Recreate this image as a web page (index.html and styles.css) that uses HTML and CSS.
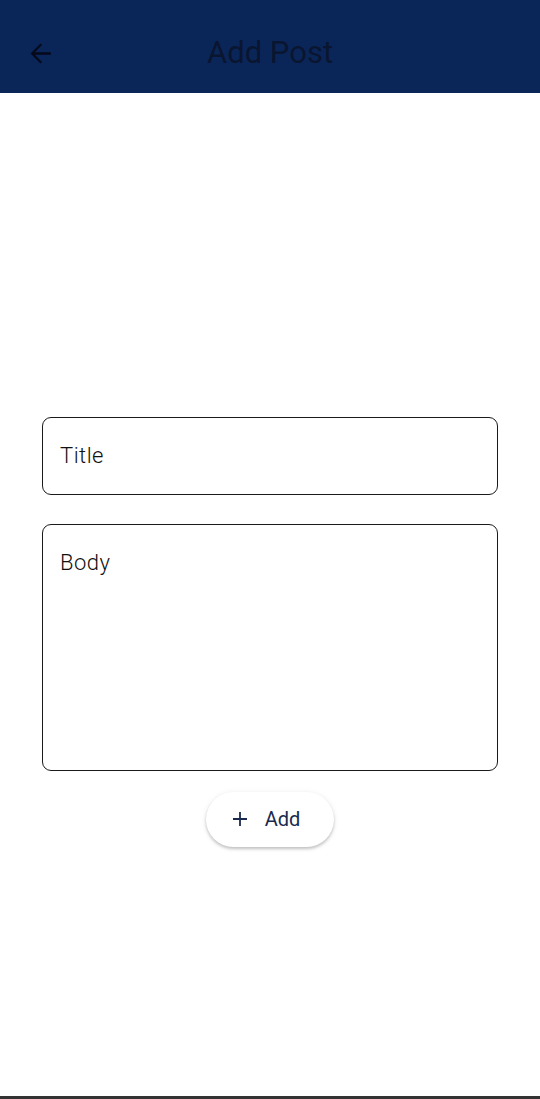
FILE: index.html
```html
<!DOCTYPE html>
<html>
<head>
<meta charset="utf-8">
<link rel="stylesheet" href="styles.css">
</head>
<body>
<div class="screen">
  <header class="appbar">
    <button class="back" aria-label="Back">
      <svg width="31" height="31" viewBox="0 0 24 24"><path d="M20 11.1H7.6l5.6-5.6L12 4.3 4.3 12l7.7 7.7 1.2-1.2-5.6-5.6H20z" fill="#05091a"/></svg>
    </button>
    <h1 class="title">Add Post</h1>
  </header>
  <main class="content">
    <div class="field title-field"><span class="label">Title</span></div>
    <div class="field body-field"><span class="label">Body</span></div>
    <button class="add-btn">
      <svg width="16" height="16" viewBox="0 0 16 16"><path d="M8 1v14M1 8h14" stroke="#1a2a4f" stroke-width="1.8"/></svg>
      <span>Add</span>
    </button>
  </main>
  <div class="navbar"></div>
</div>
</body>
</html>
```
FILE: styles.css
```css
* { box-sizing: border-box; }
html, body { margin: 0; padding: 0; }
body { background: #fff; font-family: Roboto, "Noto Sans", sans-serif; }
.screen { width: 540px; height: 1099px; display: flex; flex-direction: column; }
.appbar {
  height: 93px; background: #0a2659; display: flex; align-items: center;
  padding: 0 0 0 24px; position: relative; flex: none;
}
.back { background: none; border: 0; padding: 0; width: 32px; height: 32px; display: flex; align-items: center; justify-content: center; margin-top: 14px; }
.title {
  position: absolute; left: 0; right: 0; top: 31px; margin: 0; text-align: center;
  font-weight: 400; font-size: 31px; line-height: 44px; color: #0a1530;
}
.content { flex: 1; display: flex; flex-direction: column; align-items: center; padding-top: 324px; }
.field {
  width: 456px; border: 1.6px solid #1a1a1a; border-radius: 9px; padding: 0 17px;
}
.title-field { height: 78px; display: flex; align-items: center; }
.body-field { height: 247px; margin-top: 29px; padding-top: 24px; }
.label { font-size: 22px; font-weight: 300; color: #111; letter-spacing: 0.5px; line-height: 28px; }
.add-btn {
  margin-top: 21px; width: 128px; height: 55px; border-radius: 28px; border: 0;
  background: #fff; box-shadow: 0 2px 3px rgba(0,0,0,0.2), 0 1px 6px rgba(0,0,0,0.08);
  display: flex; align-items: center; justify-content: center; gap: 17px;
  font-family: Roboto, sans-serif; font-size: 20px; color: #1a2a4f; padding: 0 8px 2px 0;
}
.navbar { height: 3px; background: #333; flex: none; margin-top: auto; }
```
